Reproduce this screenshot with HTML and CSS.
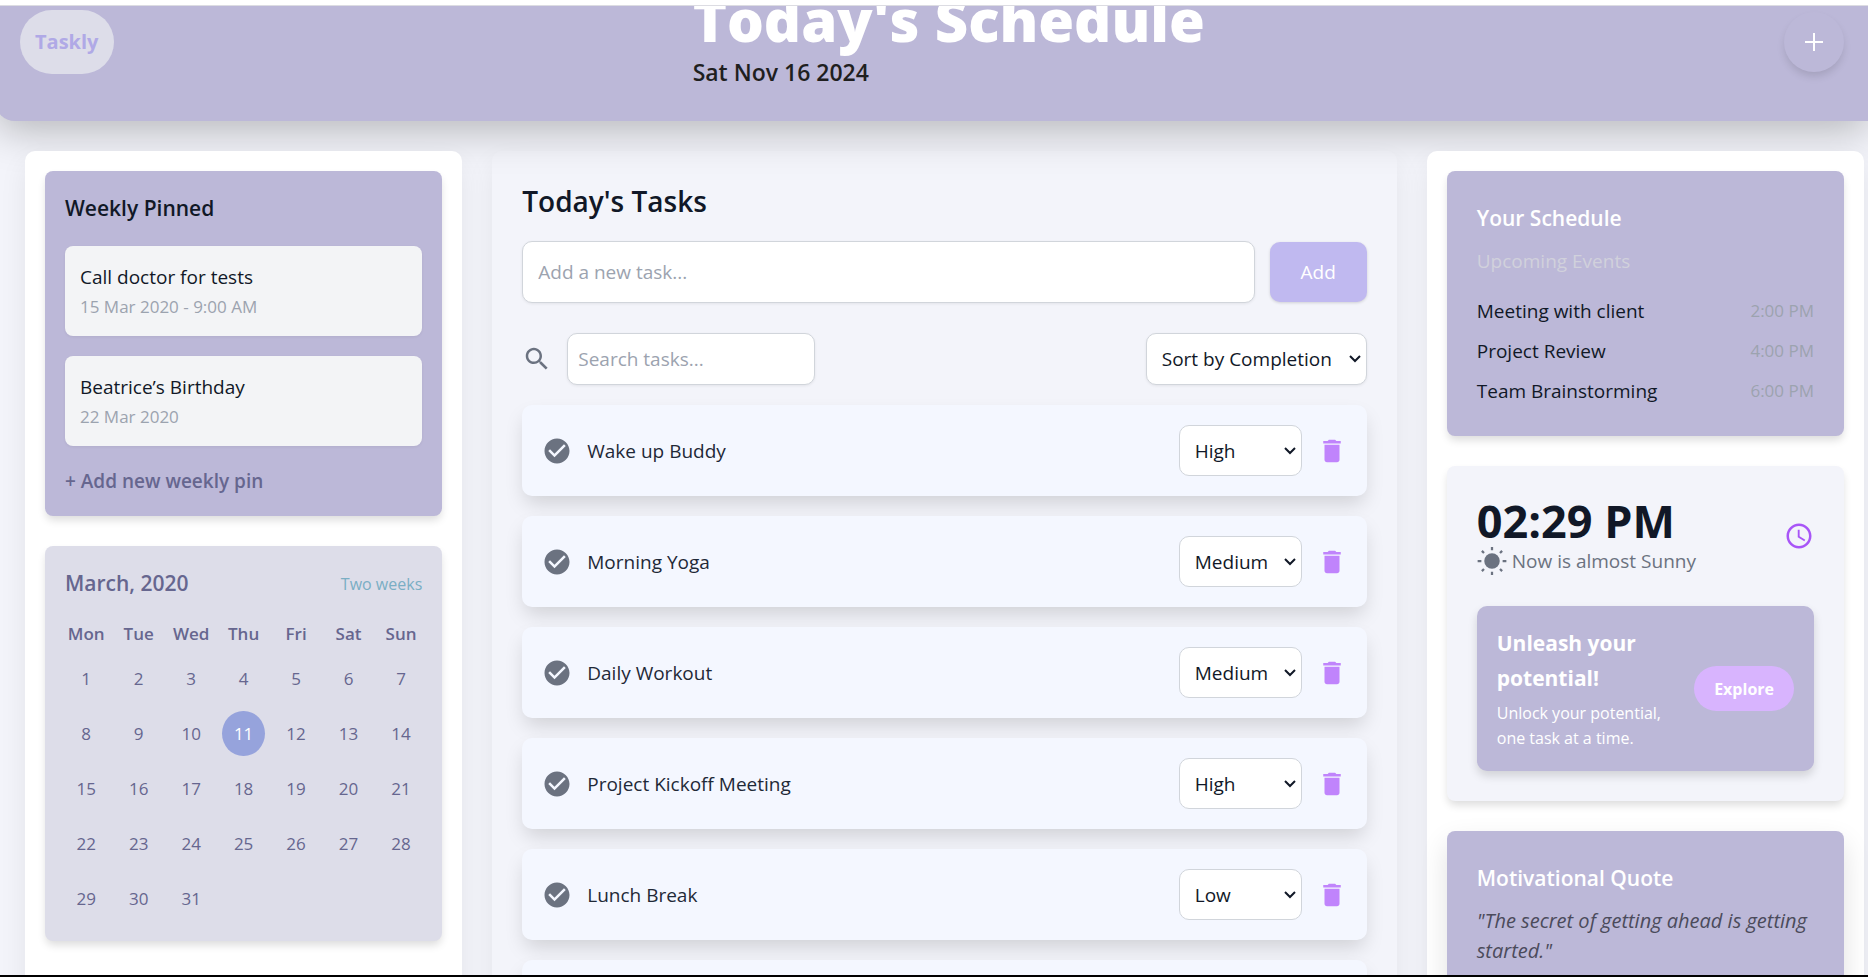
FILE: index.html
```html
<!DOCTYPE html>
<html lang="en">
<head>
<meta charset="utf-8">
<title>Taskly</title>
<link rel="stylesheet" href="styles.css">
</head>
<body>
<svg class="sprite" aria-hidden="true">
  <symbol id="i-search" viewBox="0 0 24 24"><path d="M15.5 14h-.79l-.28-.27C15.41 12.59 16 11.11 16 9.5 16 5.91 13.09 3 9.5 3S3 5.91 3 9.5 5.91 16 9.5 16c1.61 0 3.09-.59 4.23-1.57l.27.28v.79l5 4.99L20.49 19zm-6 0C7.01 14 5 11.99 5 9.5S7.01 5 9.5 5 14 7.01 14 9.5 11.99 14 9.5 14"/></symbol>
  <symbol id="i-check" viewBox="0 0 24 24"><path d="M12 2C6.48 2 2 6.48 2 12s4.48 10 10 10 10-4.480 10-10S17.520 2 12 2m-2 15-5-5 1.410-1.410L10 14.170l7.590-7.590L19 8z"/></symbol>
  <symbol id="i-trash" viewBox="0 0 24 24"><path d="M6 19c0 1.100.900 2 2 2h8c1.100 0 2-.900 2-2V7H6zM19 4h-3.500l-1-1h-5l-1 1H5v2h14z"/></symbol>
  <symbol id="i-clock" viewBox="0 0 24 24"><path d="M11.990 2C6.470 2 2 6.480 2 12s4.470 10 9.990 10C17.520 22 22 17.520 22 12S17.520 2 11.990 2M12 20c-4.420 0-8-3.580-8-8s3.580-8 8-8 8 3.580 8 8-3.580 8-8 8m.500-13H11v6l5.250 3.150.750-1.230-4.500-2.670z"/></symbol>
  <symbol id="i-sun" viewBox="0 0 24 24"><circle cx="12" cy="12" r="6.200"/><path fill="none" stroke="currentColor" stroke-width="1.800" d="M12 .800v2.600M12 20.600v2.600M.500 12h3M20.500 12h3M3.900 3.900l1.700 1.700M18.400 18.400l1.700 1.700M3.900 20.100l1.700-1.700M18.400 5.600l1.700-1.700"/></symbol>
</svg>
<div class="top-edge"></div>
<div class="app">
  <header class="header">
    <div class="logo">Taskly</div>
    <div>
      <h1 class="header-title">Today's Schedule</h1>
      <p class="header-date">Sat Nov 16 2024</p>
    </div>
    <button class="round-btn" type="button" aria-label="New task"><svg class="plus" viewBox="0 0 20 20"><path d="M10 1v18M1 10h18"/></svg></button>
  </header>
  <main class="columns">
    <aside class="side">
      <section class="card pinned">
        <h2 class="card-title dark">Weekly Pinned</h2>
        <div class="pin"><p class="text">Call doctor for tests</p><p class="small">15 Mar 2020 - 9:00 AM</p></div>
        <div class="pin"><p class="text">Beatrice’s Birthday</p><p class="small">22 Mar 2020</p></div>
        <button class="link-btn" type="button">+ Add new weekly pin</button>
      </section>
      <section class="card calendar">
        <div class="cal-head"><h2 class="card-title muted">March, 2020</h2><a class="weeks" href="#">Two weeks</a></div>
        <div class="days names"><span>Mon</span><span>Tue</span><span>Wed</span><span>Thu</span><span>Fri</span><span>Sat</span><span>Sun</span></div>
        <div class="days dates">
          <span>1</span><span>2</span><span>3</span><span>4</span><span>5</span><span>6</span><span>7</span>
          <span>8</span><span>9</span><span>10</span><span class="today">11</span><span>12</span><span>13</span><span>14</span>
          <span>15</span><span>16</span><span>17</span><span>18</span><span>19</span><span>20</span><span>21</span>
          <span>22</span><span>23</span><span>24</span><span>25</span><span>26</span><span>27</span><span>28</span>
          <span>29</span><span>30</span><span>31</span>
        </div>
      </section>
    </aside>
    <section class="tasks">
      <h2 class="tasks-title">Today's Tasks</h2>
      <form class="add-row">
        <input class="field add-input" type="text" placeholder="Add a new task..." aria-label="New task">
        <button class="add-btn" type="button">Add</button>
      </form>
      <div class="filter-row">
        <label class="search"><svg class="icon gray"><use href="#i-search"/></svg><input class="field search-input" type="text" placeholder="Search tasks..." aria-label="Search tasks"></label>
        <select class="field sort" aria-label="Sort"><option>Sort by Completion</option><option>Sort by Priority</option></select>
      </div>
      <ul class="task-list">
        <li class="task"><svg class="icon gray"><use href="#i-check"/></svg><span class="task-name">Wake up Buddy</span><select class="field priority" aria-label="Priority"><option selected>High</option><option>Medium</option><option>Low</option></select><button class="icon-btn" type="button" aria-label="Delete"><svg class="icon violet"><use href="#i-trash"/></svg></button></li>
        <li class="task"><svg class="icon gray"><use href="#i-check"/></svg><span class="task-name">Morning Yoga</span><select class="field priority" aria-label="Priority"><option>High</option><option selected>Medium</option><option>Low</option></select><button class="icon-btn" type="button" aria-label="Delete"><svg class="icon violet"><use href="#i-trash"/></svg></button></li>
        <li class="task"><svg class="icon gray"><use href="#i-check"/></svg><span class="task-name">Daily Workout</span><select class="field priority" aria-label="Priority"><option>High</option><option selected>Medium</option><option>Low</option></select><button class="icon-btn" type="button" aria-label="Delete"><svg class="icon violet"><use href="#i-trash"/></svg></button></li>
        <li class="task"><svg class="icon gray"><use href="#i-check"/></svg><span class="task-name">Project Kickoff Meeting</span><select class="field priority" aria-label="Priority"><option selected>High</option><option>Medium</option><option>Low</option></select><button class="icon-btn" type="button" aria-label="Delete"><svg class="icon violet"><use href="#i-trash"/></svg></button></li>
        <li class="task"><svg class="icon gray"><use href="#i-check"/></svg><span class="task-name">Lunch Break</span><select class="field priority" aria-label="Priority"><option>High</option><option>Medium</option><option selected>Low</option></select><button class="icon-btn" type="button" aria-label="Delete"><svg class="icon violet"><use href="#i-trash"/></svg></button></li>
        <li class="task"></li>
      </ul>
    </section>
    <aside class="side">
      <section class="card roomy schedule">
        <h2 class="card-title">Your Schedule</h2>
        <p class="text upcoming">Upcoming Events</p>
        <ul class="events">
          <li><span>Meeting with client</span><time>2:00 PM</time></li>
          <li><span>Project Review</span><time>4:00 PM</time></li>
          <li><span>Team Brainstorming</span><time>6:00 PM</time></li>
        </ul>
      </section>
      <section class="card roomy clock">
        <div class="clock-row">
          <div>
            <p class="time">02:29 PM</p>
            <p class="weather"><svg class="icon"><use href="#i-sun"/></svg>Now is almost Sunny</p>
          </div>
          <svg class="icon purple"><use href="#i-clock"/></svg>
        </div>
        <div class="promo">
          <div>
            <h3 class="promo-title">Unleash your potential!</h3>
            <p class="promo-text">Unlock your potential, one task at a time.</p>
          </div>
          <button class="explore" type="button">Explore</button>
        </div>
      </section>
      <section class="card roomy quote">
        <h2 class="card-title">Motivational Quote</h2>
        <p class="quote-text">"The secret of getting ahead is getting started."</p>
      </section>
    </aside>
  </main>
</div>
<div class="bottom-edge"></div>
</body>
</html>
```
FILE: styles.css
```css
* { box-sizing: border-box; margin: 0; padding: 0; }
html, body { height: 100%; overflow: hidden; }
body {
  background: #f3f4fa;
  color: #111827;
  font: 19px/30px "Open Sans", "Noto Sans", sans-serif;
}
button, input, select { font: inherit; color: inherit; }
button { border: 0; cursor: pointer; }
ul { list-style: none; }
a { text-decoration: none; }
.sprite { position: absolute; width: 0; height: 0; }
.top-edge { position: fixed; inset: 0 0 auto; height: 6px; background: #fff; border-bottom: 1px solid #dcdce2; z-index: 2; }
.bottom-edge { position: fixed; inset: auto 0 0; height: 2px; background: #000; z-index: 2; }

/* The page rests slightly scrolled under the top edge. */
.app { margin: -39px 0 0 -5px; }
.header {
  display: flex; align-items: center; justify-content: space-between;
  height: 160px; padding: 2px 24px 0 25px;
  background: #bcb8d8; border-bottom-left-radius: 20px;
  box-shadow: 0 10px 40px rgba(0, 0, 0, .25);
}
.logo { padding: 17px 15px; border-radius: 32px; background: #dddde9; color: #b0a9e6; font-size: 20px; font-weight: 700; }
.header-title { color: #fff; font-size: 58px; line-height: 50px; font-weight: 800; margin-bottom: 10px; }
.header-date { color: #1f1f1f; font-size: 23px; line-height: 35px; font-weight: 600; }
.round-btn { display: grid; place-items: center; width: 60px; height: 60px; border-radius: 50%; background: #bcb8d8; box-shadow: 0 5px 8px -1px rgba(0, 0, 0, .13); }
.plus { width: 20px; height: 20px; fill: none; stroke: #fff; stroke-width: 2; }

.columns { display: grid; grid-template-columns: repeat(12, 1fr); gap: 30px; padding: 30px 4px 30px 30px; }
.side { grid-column: span 3; padding: 20px; border-radius: 10px; background: #fff; box-shadow: 0 12px 28px rgba(0, 0, 0, .07); }
.card { padding: 20px; margin-bottom: 30px; border-radius: 8px; background: #bcb8d8; box-shadow: 0 5px 8px -1px rgba(0, 0, 0, .14); }
.roomy { padding: 30px; }
.card-title { color: #fff; font-size: 21px; line-height: 35px; font-weight: 600; }
.card-title.dark { color: #111827; margin-bottom: 20px; }
.card-title.muted { color: #66668f; }
.pin { padding: 16px 15px 14px; margin-bottom: 20px; border-radius: 8px; background: #f3f4f6; box-shadow: 0 1px 3px rgba(0, 0, 0, .06); }
.small { color: #9ca3af; font-size: 17px; }
.link-btn { display: block; background: none; color: #66668f; font-weight: 600; line-height: 30px; }

.calendar { background: #dddde9; color: #66668f; }
.cal-head { display: flex; justify-content: space-between; align-items: center; margin-bottom: 20px; }
.weeks { color: #7aaec4; font-size: 16px; }
.days { display: grid; grid-template-columns: repeat(7, 1fr); column-gap: 10px; text-align: center; font-size: 17px; }
.names { font-weight: 600; line-height: 25px; margin-bottom: 10px; }
.names span { justify-self: center; }
.dates { row-gap: 10px; line-height: 45px; }
.today { border-radius: 50%; background: #96a3dc; color: #fff; }

.tasks { grid-column: span 6; padding: 30px; border-radius: 10px; box-shadow: 0 12px 28px rgba(0, 0, 0, .07); }
.tasks-title { font-size: 28px; line-height: 40px; font-weight: 600; margin-bottom: 20px; }
.field { border: 1px solid #d1d5db; border-radius: 10px; background-color: #fff; box-shadow: 0 1px 3px rgba(0, 0, 0, .07); }
.field::placeholder { color: #9ca3af; }
select.field {
  appearance: none; padding: 0 15px;
  background-image: url("data:image/svg+xml,%3Csvg xmlns='http://www.w3.org/2000/svg' width='12' height='8' fill='none' stroke='%23111827' stroke-width='2'%3E%3Cpath d='M1 1l5 5 5-5'/%3E%3C/svg%3E");
  background-repeat: no-repeat; background-position: right 5px center;
}
.add-row { display: flex; align-items: center; gap: 15px; margin-bottom: 30px; }
.add-input { flex: 1; min-width: 0; height: 62px; padding: 0 15px; }
.add-btn { width: 97px; height: 60px; border-radius: 10px; background: #c0b9f0; color: #fff; box-shadow: 0 1px 3px rgba(0, 0, 0, .15); }
.filter-row { display: flex; align-items: center; justify-content: space-between; margin-bottom: 20px; }
.search { display: flex; align-items: center; gap: 15px; }
.search-input { width: 248px; height: 52px; padding: 0 10px; }
.sort { width: 221px; height: 52px; }
.priority { width: 123px; height: 51px; box-shadow: none; }
.icon { flex: none; width: 30px; height: 30px; fill: currentColor; display: block; }
.gray { color: #6b7280; }
.violet { color: #c084fc; }
.purple { color: #a855f7; }
.icon-btn { background: none; }
.task-list { display: grid; gap: 20px; }
.task { display: flex; align-items: center; gap: 15px; min-height: 91px; padding: 20px; border-radius: 10px; background: #f4f7ff; box-shadow: 0 10px 20px -3px rgba(0, 0, 0, .15); }
.task-name { flex: 1; color: #1f2937; }

.schedule .card-title { margin-bottom: 10px; }
.upcoming { color: #d1d1dc; margin-bottom: 20px; }
.events { display: grid; gap: 10px; }
.events li { display: flex; justify-content: space-between; }
.events time { color: #9ca3af; font-size: 17px; }
.clock { background: #f3f4fa; }
.clock-row { display: flex; align-items: center; justify-content: space-between; margin-bottom: 30px; }
.time { font-size: 45px; line-height: 50px; font-weight: 700; }
.weather { display: flex; align-items: center; gap: 5px; height: 30px; color: #6b7280; }
.promo { display: flex; align-items: center; justify-content: space-between; gap: 20px; padding: 20px; border-radius: 10px; background: #bcb8d8; color: #fff; box-shadow: 0 5px 10px rgba(0, 0, 0, .14); }
.promo-title { font-size: 21px; line-height: 35px; font-weight: 700; margin-bottom: 5px; }
.promo-text { font-size: 16px; line-height: 25px; }
.explore { flex: none; padding: 0 20px; height: 45px; border-radius: 23px; background: #d8b4fe; color: #fff; font-size: 16px; font-weight: 700; }
.quote { box-shadow: 0 12px 28px rgba(0, 0, 0, .12); }
.quote .card-title { margin-bottom: 10px; }
.quote-text { color: #4b4b5b; font-size: 20px; font-style: italic; }
```
